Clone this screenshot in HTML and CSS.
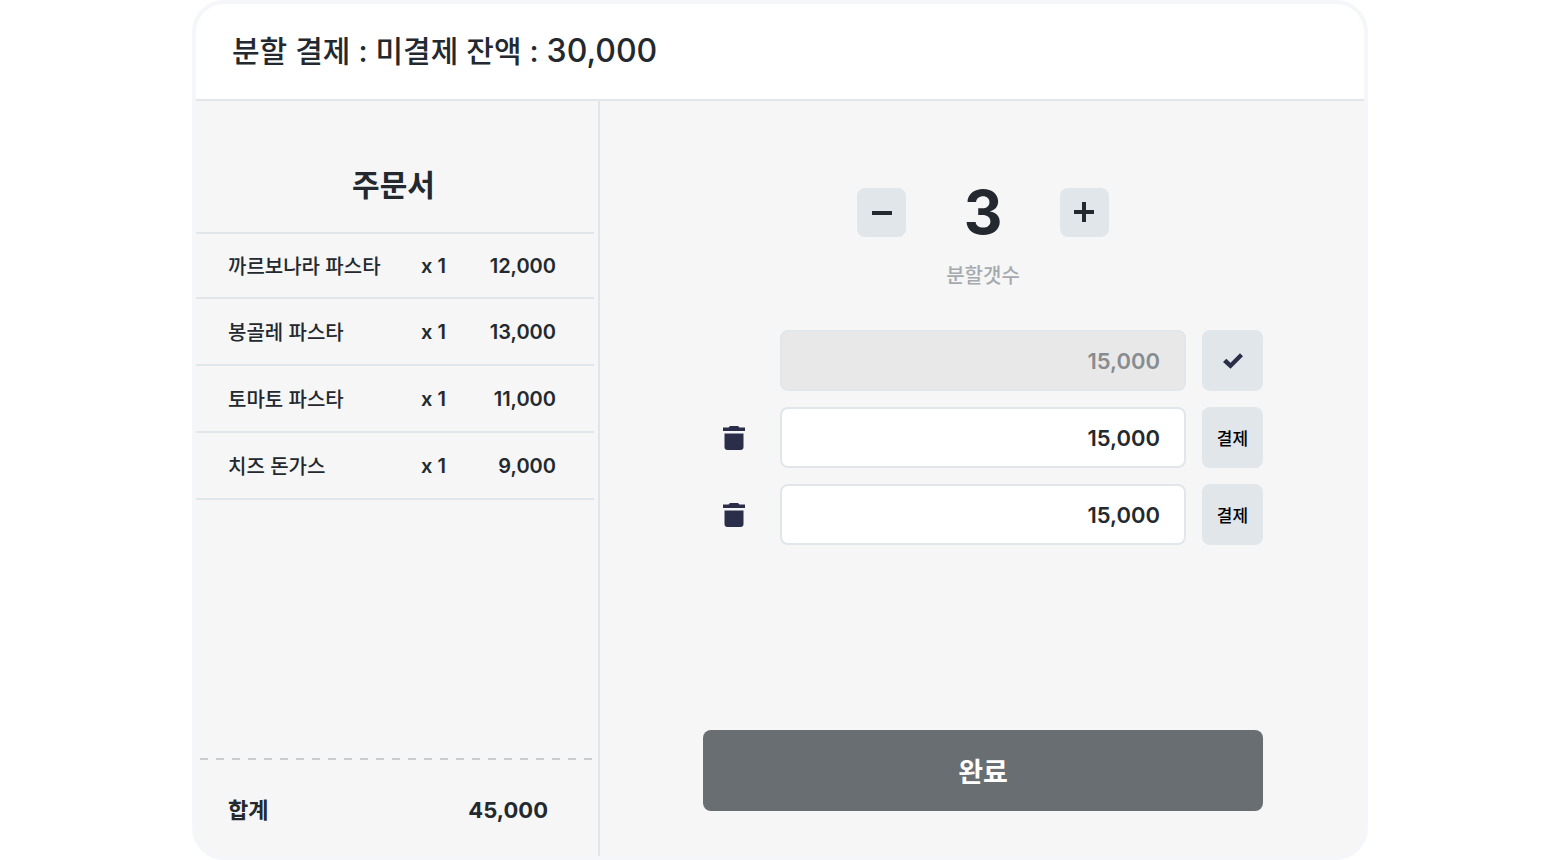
FILE: index.html
```
<!DOCTYPE html>
<html lang="ko">
<head>
    <meta charset="UTF-8">
    <meta name="viewport" content="width=device-width, initial-scale=1.0">
    <title>분할 결제</title>
    <link rel="stylesheet" href="styles.css">
</head>
<body>
    <main class="modal">
        <header class="modal-header">
            <h1>분할 결제 : 미결제 잔액 : <span class="balance">30,000</span></h1>
        </header>
        <div class="modal-body">
            <section class="order">
                <h2>주문서</h2>
                <table class="order-list">
                    <tbody>
                        <tr>
                            <td class="name">까르보나라 파스타</td>
                            <td class="count">x 1</td>
                            <td class="price">12,000</td>
                        </tr>
                        <tr>
                            <td class="name">봉골레 파스타</td>
                            <td class="count">x 1</td>
                            <td class="price">13,000</td>
                        </tr>
                        <tr>
                            <td class="name">토마토 파스타</td>
                            <td class="count">x 1</td>
                            <td class="price">11,000</td>
                        </tr>
                        <tr>
                            <td class="name">치즈 돈가스</td>
                            <td class="count">x 1</td>
                            <td class="price">9,000</td>
                        </tr>
                    </tbody>
                </table>
                <svg class="dashed-line" aria-hidden="true"><line x1="0" y1="1" x2="100%" y2="1"/></svg>
                <div class="total">
                    <span>합계</span>
                    <span>45,000</span>
                </div>
            </section>

            <section class="split">
                <div class="counter">
                    <button type="button" class="counter-button" aria-label="분할 줄이기">
                        <svg width="24" height="24" viewBox="0 0 24 24"><path d="M2 11h20v4H2z"/></svg>
                    </button>
                    <output class="counter-value" id="splitCount">3</output>
                    <button type="button" class="counter-button" aria-label="분할 늘리기">
                        <svg width="24" height="24" viewBox="0 0 24 24"><path d="M10 2h4v8h8v4h-8v8h-4v-8H2v-4h8z"/></svg>
                    </button>
                </div>
                <label class="counter-label" for="splitCount">분할갯수</label>

                <div class="payments">
                    <div class="payment">
                        <input type="text" class="amount" value="15,000" aria-label="첫 번째 금액" disabled>
                        <button type="button" class="pay-button" aria-label="결제 완료됨">
                            <svg width="24" height="24" viewBox="0 0 24 24"><path d="M2 13l3.3-3.3 4.2 4.1L19 4.3l3 3L9.5 19.8z"/></svg>
                        </button>
                    </div>
                    <div class="payment">
                        <button type="button" class="delete-button" aria-label="삭제">
                            <svg width="24" height="28" viewBox="0 0 24 28"><path d="M1 3.5h5.5L8 2h8l1.5 1.5H23V7H1zM2.5 9.5h19V23q0 3-3 3h-13q-3 0-3-3z"/></svg>
                        </button>
                        <input type="text" class="amount" value="15,000" aria-label="두 번째 금액">
                        <button type="button" class="pay-button">결제</button>
                    </div>
                    <div class="payment">
                        <button type="button" class="delete-button" aria-label="삭제">
                            <svg width="24" height="28" viewBox="0 0 24 28"><path d="M1 3.5h5.5L8 2h8l1.5 1.5H23V7H1zM2.5 9.5h19V23q0 3-3 3h-13q-3 0-3-3z"/></svg>
                        </button>
                        <input type="text" class="amount" value="15,000" aria-label="세 번째 금액">
                        <button type="button" class="pay-button">결제</button>
                    </div>
                </div>

                <button type="button" class="done-button">완료</button>
            </section>
        </div>
    </main>
</body>
</html>
```
FILE: styles.css
```
* {
    box-sizing: border-box;
}

body {
    margin: 0;
    padding: 0 192px;
    background-color: #fff;
    color: #23292e;
    font-family: Inter, "Noto Sans CJK KR", sans-serif;
    font-weight: 500;
}

h1, h2 {
    margin: 0;
}

button, input {
    font-family: inherit;
    color: inherit;
}

button {
    padding: 0;
    border: none;
    cursor: pointer;
}

svg {
    display: block;
}

.modal {
    display: flex;
    flex-direction: column;
    min-height: 100vh;
    border: 4px solid #f5f6fa;
    border-radius: 32px;
    background-color: #f6f6f6;
    overflow: hidden;
}

.modal-header {
    padding: 23px 36px 24px;
    border-bottom: 2px solid #e1e6ea;
    background-color: #fff;
}

.modal-header h1 {
    font-size: 30px;
    font-weight: 500;
    line-height: 48px;
}

.balance {
    font-size: 32px;
}

.modal-body {
    flex: 1;
    display: grid;
    grid-template-columns: 404px 1fr;
}

/* Order sheet */
.order {
    display: flex;
    flex-direction: column;
    padding-right: 4px;
    border-right: 2px solid #e1e6ea;
}

.order h2 {
    padding: 60px 3px 23px 0;
    font-size: 30px;
    font-weight: 700;
    line-height: 48px;
    text-align: center;
}

.order-list {
    width: 100%;
    border-collapse: collapse;
    border-top: 2px solid #e1e6ea;
    font-size: 20px;
}

.order-list td {
    height: 67px;
    padding: 0;
    border-bottom: 2px solid #e1e6ea;
}

.order-list tr:first-child td {
    height: 65px;
}

.order-list .name {
    padding-left: 32px;
}

.order-list .count {
    width: 48px;
    font-weight: 600;
}

.order-list .price {
    width: 125px;
    padding-right: 38px;
    font-weight: 600;
    text-align: right;
}

.dashed-line {
    width: calc(100% - 4px);
    height: 2px;
    margin: auto 0 0 4px;
}

.dashed-line line {
    stroke: #c8cdd1;
    stroke-width: 2;
    stroke-dasharray: 8 8;
}

.total {
    display: flex;
    justify-content: space-between;
    padding: 32px 46px 28px 32px;
    font-size: 22px;
    font-weight: 700;
    line-height: 36px;
}

/* Split payment */
.split {
    display: flex;
    flex-direction: column;
    align-items: center;
    padding: 79px 100px 45px 102px;
}

.counter {
    display: flex;
    align-items: center;
    justify-content: space-between;
    width: 252px;
    height: 64px;
}

.counter-button {
    display: grid;
    place-items: center;
    width: 49px;
    height: 49px;
    border-radius: 8px;
    background-color: #e1e6ea;
}

.counter-value {
    font-size: 60px;
    font-weight: 700;
    line-height: 64px;
}

.counter-button svg {
    fill: #23292e;
}

.counter-label {
    margin-top: 17px;
    color: #a5aaae;
    font-size: 20px;
    line-height: 30px;
}

.payments {
    display: flex;
    flex-direction: column;
    gap: 16px;
    width: 100%;
    max-width: 560px;
    margin-top: 39px;
}

.payment {
    display: grid;
    grid-template-columns: 61px 1fr 61px;
    gap: 16px;
    height: 61px;
}

.delete-button {
    display: grid;
    place-items: center;
    background: none;
}

.delete-button svg,
.pay-button svg {
    fill: #2b2e48;
}

.amount {
    grid-column: 2;
    width: 100%;
    padding: 0 24px;
    border: 2px solid #e1e6ea;
    border-radius: 8px;
    background-color: #fff;
    font-size: 22px;
    font-weight: 600;
    text-align: right;
}

.amount:disabled {
    background-color: #e8e8e8;
    color: #878c90;
}

.pay-button {
    display: grid;
    place-items: center;
    border-radius: 8px;
    background-color: #e1e6ea;
    color: #000;
    font-size: 17px;
    font-weight: 500;
}

.done-button {
    width: 100%;
    max-width: 560px;
    height: 81px;
    margin-top: auto;
    border-radius: 8px;
    background-color: #696e72;
    color: #fff;
    font-size: 27px;
    font-weight: 700;
}
```
